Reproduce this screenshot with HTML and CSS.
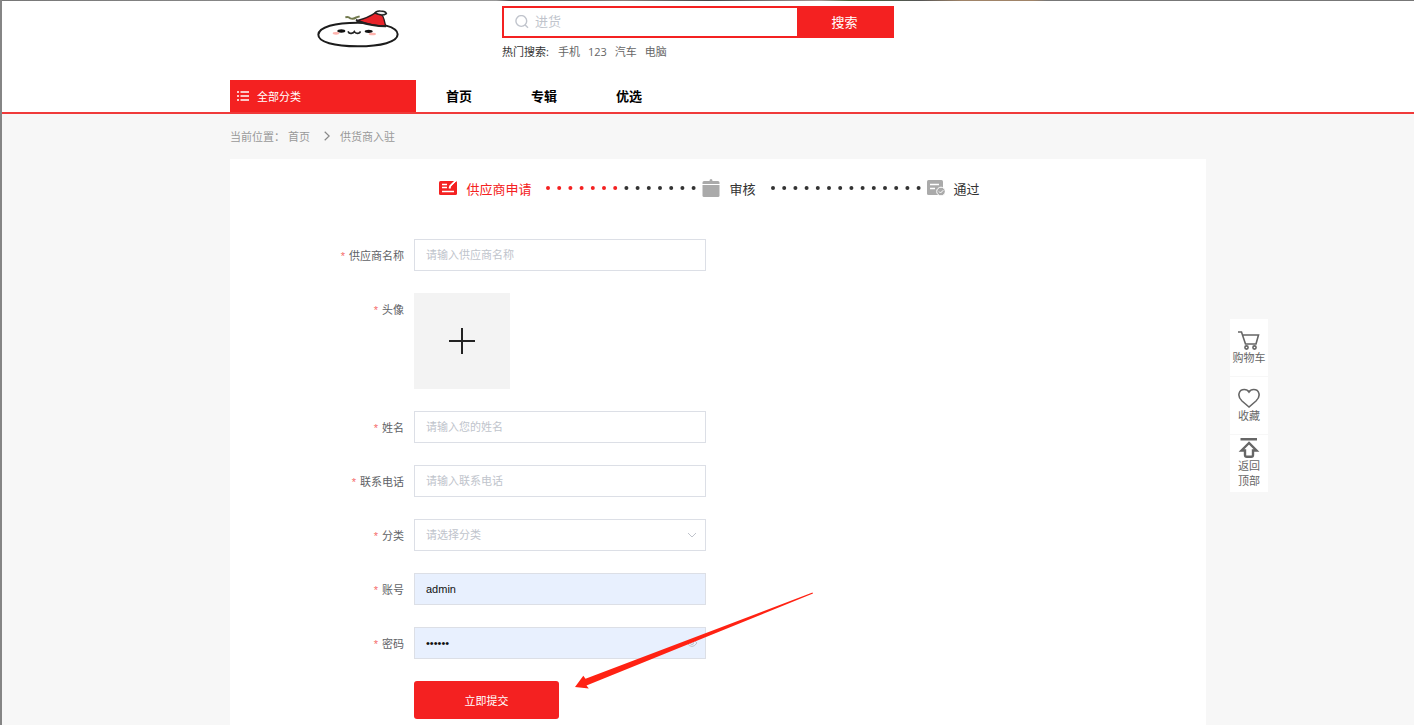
FILE: index.html
```html
<!DOCTYPE html>
<html lang="zh-CN">
<head>
  <meta charset="UTF-8" />
  <meta name="viewport" content="width=device-width, initial-scale=1.0" />
  <title>供货商入驻</title>
  <link rel="stylesheet" href="styles.css">
</head>
<body>

  <div class="banner"></div>

  <header class="header">
    <div class="container header-top">
      <a class="logo" href="#" aria-label="首页">
        <svg viewBox="15 12 258 126" width="86" height="42">
          <path d="M25 92C27 69 75 56 143 56C211 56 263 68 263 91C263 114 213 127 143 127C73 127 24 114 25 92z" fill="#fff" stroke="#1c1c1c" stroke-width="6"/>
          <path d="M143 49Q174 42 197 26Q219 28 222 46L227 66Q190 67 143 49z" fill="#e8232a" stroke="#2a1a1c" stroke-width="4"/>
          <path d="M141 46Q138 52 149 54Q185 66 228 67" fill="none" stroke="#222" stroke-width="6"/>
          <path d="M195 27Q198 20 211 21Q227 21 229 29Q219 36 205 31z" fill="#eee" stroke="#222" stroke-width="5"/>
          <path d="M106 40Q115 37 121 43Q131 46 139 40L149 37" fill="none" stroke="#70784c" stroke-width="6"/>
          <ellipse cx="94" cy="81" rx="12" ry="5" fill="#111"/>
          <ellipse cx="176" cy="82" rx="12" ry="5" fill="#111"/>
          <path d="M114 82Q117 89 124 88Q131 87 133 83Q136 88 142 88Q150 88 151 82" fill="none" stroke="#222" stroke-width="5"/>
          <ellipse cx="78" cy="88" rx="10" ry="4" fill="#ffb3ad"/>
          <ellipse cx="187" cy="90" rx="11" ry="4" fill="#ffb3ad"/>
        </svg>
      </a>
      <div class="search">
        <form class="search-form">
          <svg class="search-icon" viewBox="0 0 14 14" width="14" height="14">
            <circle cx="6.3" cy="6" r="5.4"/>
            <path d="M10.2 10L13 12.800"/>
          </svg>
          <input type="text" placeholder="进货" aria-label="搜索">
          <button type="submit">搜索</button>
        </form>
        <div class="hot">
          <span>热门搜索:</span>
          <a href="#">手机</a>
          <a href="#">123</a>
          <a href="#">汽车</a>
          <a href="#">电脑</a>
        </div>
      </div>
    </div>

    <nav class="container nav">
      <a class="nav-all" href="#">
        <svg viewBox="0 0 12 10" width="12" height="10">
          <path d="M0 1h2M0 5h2M0 9h2M3.5 1H12M3.5 5H12M3.5 9H12" stroke="#fff" stroke-width="1.3"/>
        </svg>
        全部分类
      </a>
      <a class="nav-link" href="#">首页</a>
      <a class="nav-link" href="#">专辑</a>
      <a class="nav-link" href="#">优选</a>
    </nav>
  </header>

  <main class="main">
    <div class="container crumbs">
      <span>当前位置：</span>
      <a href="#">首页</a>
      <svg viewBox="0 0 6 10" width="6" height="10"><path d="M.7.7L5.2 5 .7 9.3" fill="none" stroke="#888" stroke-width="1.200"/></svg>
      <span>供货商入驻</span>
    </div>

    <section class="container card">
      <div class="steps">
        <div class="step active">
          <svg viewBox="0 0 18 16" width="18" height="16">
            <rect y="1" width="18" height="14" rx="1.5" fill="#f42121"/>
            <path d="M3 4.5h5M3 7.5h5M3 11.5h12" stroke="#fff" stroke-width="1.3"/>
            <path d="M10.5 8.5L11.3 6 17 0.5" fill="none" stroke="#fff" stroke-width="2"/>
            <path d="M12.6 6.6L17.6 1.6" stroke="#f42121" stroke-width="1"/>
          </svg>
          <span>供应商申请</span>
        </div>
        <svg class="dots" viewBox="0 0 150 4" width="150" height="4">
          <path class="dot-red" d="M2 2H72"/>
          <path class="dot-dark" d="M80.4 2H149"/>
        </svg>
        <div class="step">
          <svg viewBox="0 0 18 18" width="18" height="18">
            <path d="M2 2h5.5q0-2 1.5-2t1.5 2H16q1.5 0 1.5 1.5V5H.5V3.5Q.5 2 2 2z" fill="#aaa"/>
            <path d="M.5 6h17v10.5q0 1.5-1.5 1.5H2q-1.5 0-1.5-1.5z" fill="#aaa"/>
          </svg>
          <span>审核</span>
        </div>
        <svg class="dots" viewBox="0 0 150 4" width="150" height="4">
          <path class="dot-dark" d="M2 2H149"/>
        </svg>
        <div class="step">
          <svg viewBox="0 0 18 16" width="18" height="16">
            <rect width="16" height="15" rx="1.5" fill="#aaa"/>
            <path d="M3 4.5h9M3 8.5h5" stroke="#fff" stroke-width="1.3"/>
            <circle cx="14" cy="11.5" r="4.3" fill="#aaa" stroke="#fff"/>
            <path d="M12 11.5l1.5 1.5 2.8-2.8" fill="none" stroke="#fff"/>
          </svg>
          <span>通过</span>
        </div>
      </div>

      <form class="form">
        <div class="row">
          <label for="company">供应商名称</label>
          <input id="company" class="field" type="text" placeholder="请输入供应商名称">
        </div>
        <div class="row">
          <label for="avatar">头像</label>
          <div class="upload">
            <input id="avatar" type="file" accept="image/*">
            <svg viewBox="0 0 26 26" width="26" height="26"><path d="M13 0v26M0 13h26"/></svg>
          </div>
        </div>
        <div class="row">
          <label for="username">姓名</label>
          <input id="username" class="field" type="text" placeholder="请输入您的姓名">
        </div>
        <div class="row">
          <label for="phone">联系电话</label>
          <input id="phone" class="field" type="tel" placeholder="请输入联系电话">
        </div>
        <div class="row">
          <label for="category">分类</label>
          <div class="field-wrap">
            <select id="category" class="field">
              <option>请选择分类</option>
            </select>
            <svg class="suffix" viewBox="0 0 10 10" width="10" height="10"><path d="M1 3l4 4 4-4"/></svg>
          </div>
        </div>
        <div class="row">
          <label for="account">账号</label>
          <input id="account" class="field filled" type="text" value="admin">
        </div>
        <div class="row">
          <label for="password">密码</label>
          <div class="field-wrap">
            <input id="password" class="field filled" type="password" value="123456">
            <svg class="suffix" viewBox="0 0 10 10" width="10" height="10"><path d="M0 5q5-7 10 0q-5 7-10 0z"/><circle cx="5" cy="5" r="1.5"/></svg>
          </div>
        </div>
        <div class="row submit-row">
          <button class="submit" type="submit">立即提交</button>
          <svg class="arrow" viewBox="575 592 239 98" width="239" height="98">
            <path d="M575 687L583.3 675.8 585.5 678.7 812.5 592.5 813 593.5 586.5 685.5 588.8 688.5z"/>
          </svg>
        </div>
      </form>
    </section>
  </main>

  <aside class="side">
    <a href="#">
      <svg viewBox="0 0 22 20" width="22" height="20">
        <path d="M0 2h3.5l4 12h10.500l2.500-9H5"/>
        <circle cx="8.500" cy="17.500" r="1.600"/>
        <circle cx="16.500" cy="17.500" r="1.600"/>
      </svg>
      购物车
    </a>
    <a href="#">
      <svg viewBox="0 0 22 20" width="22" height="20">
        <path d="M11 19L4 13C-1.500 8 1 1.500 6.300 1.500Q9.500 1.500 11 4Q12.500 1.500 15.700 1.500C21 1.500 23.500 8 18 13z"/>
      </svg>
      收藏
    </a>
    <a href="#">
      <svg class="bold" viewBox="0 0 22 20" width="22" height="20">
        <path d="M2.500 1.200h16.500M11 5L3.500 12.500H7V17Q7 18.800 8.800 18.800H13.200Q15 18.800 15 17V12.500H18.500z"/>
      </svg>
      返回<br>顶部
    </a>
  </aside>

</body>
</html>
```

FILE: styles.css
```css
* {
  margin: 0;
  padding: 0;
  box-sizing: border-box;
}

body {
  min-height: 100vh;
  display: flex;
  flex-direction: column;
  border-left: 2px solid #858585;
  background: #f7f7f7;
  color: #333;
  font-family: "Liberation Sans", "Noto Sans CJK SC", sans-serif;
  font-size: 11px;
}

a {
  color: inherit;
  text-decoration: none;
}

input,
select,
button {
  font: inherit;
  outline: none;
}

button {
  border: none;
  background: #f42121;
  color: #fff;
  cursor: pointer;
}

.banner {
  height: 1px;
  background: linear-gradient(to right, #777 0%, #999 35%, #4b4b4b 36%, #8a7f7a 44%, #444 50%, #a59a98 58%, #47623a 60%, #555 65%, #a08468 68%, #a08468 73%, #777 74%);
}

.container {
  width: 976px;
  max-width: 100%;
  margin: 0 auto;
}

/* header */
.header {
  padding-left: 20px;
  background: #fff;
  border-bottom: 2px solid #f03a3a;
}

.header-top {
  height: 79px;
  padding-top: 5px;
  display: flex;
}

.logo {
  width: 272px;
  padding: 2px 0 0 85px;
}

.search {
  width: 392px;
}

.search-form {
  height: 32px;
  display: flex;
  align-items: center;
  border: 2px solid #f42121;
}

.search-icon {
  margin: 0 6px 0 11px;
  fill: none;
  stroke: #c0c4cc;
  stroke-width: 1.4;
}

.search-form input {
  flex: 1;
  min-width: 0;
  height: 28px;
  padding-bottom: 2px;
  border: none;
  font-size: 13px;
}

.search-form button {
  width: 95px;
  height: 28px;
  padding-bottom: 1px;
  font-size: 13px;
}

::placeholder {
  color: #c0c4cc;
}

.hot {
  margin-top: 6px;
  display: flex;
  gap: 8px;
  color: #666;
  font-family: "Open Sans", "Noto Sans CJK SC", sans-serif;
  line-height: 16px;
}

.hot span {
  color: #333;
  margin-right: 1px;
}

.nav {
  height: 32px;
  display: flex;
  align-items: center;
}

.nav-all {
  width: 186px;
  height: 32px;
  padding-left: 7px;
  display: flex;
  align-items: center;
  gap: 8px;
  background: #f42121;
  color: #fff;
}

.nav-link {
  margin-left: 30px;
  margin-right: 29px;
  padding-bottom: 1px;
  color: #000;
  font-size: 13px;
  font-weight: bold;
}

/* content */
.main {
  flex: 1;
  display: flex;
  flex-direction: column;
  padding-left: 20px;
}

.crumbs {
  height: 45px;
  padding-bottom: 1px;
  display: flex;
  align-items: center;
  color: #999;
}

.crumbs span:first-child {
  margin-right: 3px;
}

.crumbs svg {
  margin: 0 10px 0 14px;
}

.card {
  flex: 1;
  background: #fff;
}

.steps {
  height: 58px;
  padding-right: 17px;
  display: flex;
  align-items: center;
  justify-content: center;
  font-size: 13px;
}

.step {
  display: flex;
  align-items: center;
  gap: 9px;
}

.step.active {
  color: #f42121;
}

.dots {
  margin: 0 6px 0 15px;
  fill: none;
  stroke-width: 4;
  stroke-linecap: round;
  stroke-dasharray: 0 11.2;
}

.dot-red {
  stroke: #f42121;
}

.dot-dark {
  stroke: #333;
}

.form {
  padding-top: 22px;
  display: flex;
  flex-direction: column;
  gap: 22px;
}

.row {
  display: flex;
}

.row label {
  width: 184px;
  padding-right: 10px;
  line-height: 34px;
  height: 32px;
  text-align: right;
  color: #606266;
}

.row label::before {
  content: "*";
  margin-right: 4px;
  color: #f56c6c;
}

.field {
  width: 292px;
  height: 32px;
  padding: 0 11px;
  border: 1px solid #dcdfe6;
  background: #fff;
}

.field.filled {
  background: #e8f0fe;
  color: #111;
}

.field-wrap {
  position: relative;
}

select.field {
  appearance: none;
  color: #c0c4cc;
}

.suffix {
  position: absolute;
  right: 9px;
  top: 11px;
  fill: none;
  stroke: #c0c4cc;
}

.upload {
  width: 96px;
  height: 96px;
  position: relative;
  display: flex;
  align-items: center;
  justify-content: center;
  background: #f3f3f3;
}

.upload input {
  position: absolute;
  inset: 0;
  width: 100%;
  opacity: 0;
  cursor: pointer;
}

.upload svg {
  stroke: #222;
  stroke-width: 2;
}

.submit-row {
  position: relative;
  padding-left: 184px;
}

.submit {
  width: 145px;
  height: 38px;
  padding-bottom: 1px;
  border-radius: 3px;
}

.arrow {
  position: absolute;
  left: 345px;
  bottom: 29px;
  fill: #ff2213;
  pointer-events: none;
}

/* floating menu */
.side {
  position: fixed;
  top: 319px;
  left: calc(50% + 523px);
  width: 38px;
}

.side a {
  height: 58px;
  display: flex;
  flex-direction: column;
  align-items: center;
  justify-content: center;
  border-bottom: 1px solid #f7f7f7;
  background: #fff;
  color: #666;
  line-height: 15px;
  text-align: center;
}

.side svg {
  flex: none;
  margin-bottom: 1px;
  fill: none;
  stroke: #666;
  stroke-width: 1.6;
}

.side .bold {
  stroke-width: 2.4;
}
```
